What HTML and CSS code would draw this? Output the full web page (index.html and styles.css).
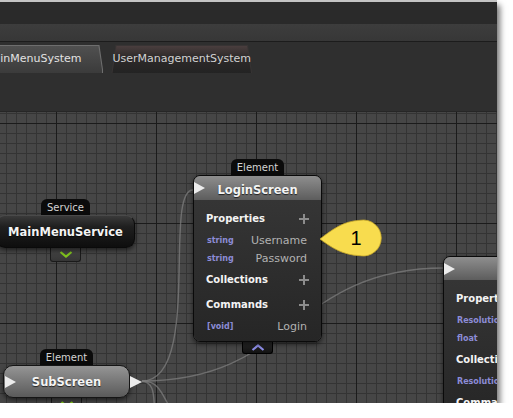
FILE: index.html
```html
<!DOCTYPE html>
<html>
<head>
<meta charset="utf-8">
<link rel="stylesheet" href="styles.css">
</head>
<body>
<div class="window">
  <div class="titlebar"></div>
  <div class="toolbar"></div>
  <div class="tabbar">
    <div class="tab tab-active"><span>MainMenuSystem</span></div>
    <div class="tab tab-inactive"><span>UserManagementSystem</span></div>
  </div>
  <div class="subbar"></div>
  <div class="canvas">
    <svg class="wires" width="497" height="291" viewBox="0 0 497 291">
      <path d="M142,269 C292,269 294,156 444,156"/>
      <path d="M142,269 C202,269 163,78 193,78"/>
      <path d="M142,269 C165,269 162,292 182,312"/>
      <path d="M142,269 C156,271 153,286 155,300"/>
    </svg>

    <div class="node n-service">
      <div class="node-label">Service</div>
      <div class="card card-service"><span class="card-title">MainMenuService</span></div>
      <div class="toggle toggle-green">
        <svg width="14" height="7" viewBox="0 0 14 7"><path d="M1.5 1 L7 5.5 L12.5 1" fill="none" stroke="#7fc21e" stroke-width="2.2"/></svg>
      </div>
    </div>

    <div class="node n-login">
      <div class="node-label">Element</div>
      <div class="card card-element">
        <div class="card-head"><span class="port-in"></span><span class="card-title">LoginScreen</span></div>
        <div class="card-body">
          <div class="section-head"><span>Properties</span><svg class="plus" width="10" height="10" viewBox="0 0 10 10"><rect x="4" y="0" width="2" height="10"/><rect x="0" y="4" width="10" height="2"/></svg></div>
          <div class="items">
            <div class="item"><span class="type">string</span><span class="name">Username</span></div>
            <div class="item"><span class="type">string</span><span class="name">Password</span></div>
          </div>
          <div class="section-head"><span>Collections</span><svg class="plus" width="10" height="10" viewBox="0 0 10 10"><rect x="4" y="0" width="2" height="10"/><rect x="0" y="4" width="10" height="2"/></svg></div>
          <div class="items"></div>
          <div class="section-head"><span>Commands</span><svg class="plus" width="10" height="10" viewBox="0 0 10 10"><rect x="4" y="0" width="2" height="10"/><rect x="0" y="4" width="10" height="2"/></svg></div>
          <div class="items">
            <div class="item"><span class="type">[void]</span><span class="name">Login</span></div>
          </div>
        </div>
      </div>
      <div class="toggle toggle-dark">
        <svg width="14" height="7" viewBox="0 0 14 7"><path d="M1.5 6 L7 1.5 L12.5 6" fill="none" stroke="#8d8de6" stroke-width="2.2"/></svg>
      </div>
    </div>

    <div class="node n-sub">
      <div class="node-label">Element</div>
      <div class="card card-sub">
        <span class="port-in port-sub"></span>
        <span class="card-title">SubScreen</span>
        <span class="port-out"></span>
      </div>
      <div class="toggle toggle-green">
        <svg width="14" height="7" viewBox="0 0 14 7"><path d="M1.5 1 L7 5.5 L12.5 1" fill="none" stroke="#7fc21e" stroke-width="2.2"/></svg>
      </div>
    </div>

    <div class="node n-right">
      <div class="card card-element">
        <div class="card-head head-right"><span class="port-in"></span></div>
        <div class="card-body">
          <div class="section-head"><span>Properties</span></div>
          <div class="items">
            <div class="item"><span class="type">Resolution</span><span class="name">Size</span></div>
            <div class="item"><span class="type">float</span><span class="name">Scale</span></div>
          </div>
          <div class="section-head"><span>Collections</span></div>
          <div class="items">
            <div class="item"><span class="type">Resolution</span><span class="name">List</span></div>
          </div>
          <div class="section-head"><span>Commands</span></div>
        </div>
      </div>
    </div>

    <svg class="callout" width="70" height="42" viewBox="316 104 70 42">
      <path d="M320,127 C332,118 343,109 360,108.3 A18,18 0 1 1 360,143.7 C343,143 332,136 320,127 Z" fill="#f8dc4e" stroke="#c9a92a" stroke-width="0.8"/>
      <text x="356" y="133" text-anchor="middle">1</text>
    </svg>
  </div>
</div>
</body>
</html>
```
FILE: styles.css
```css
html, body {
  margin: 0;
  padding: 0;
  background: #ffffff;
}

.window {
  width: 497px;
  height: 403px;
  box-sizing: border-box;
  border-top: 2px solid #c4c4c4;
  display: flex;
  flex-direction: column;
  overflow: hidden;
  box-shadow: 3px 5px 6px rgba(0, 0, 0, 0.55);
  font-family: "DejaVu Sans", Verdana, sans-serif;
}

.titlebar {
  height: 22px;
  background: #2a2a2a;
  flex: none;
}

.toolbar {
  height: 17px;
  flex: none;
  background: linear-gradient(#3d3d3d, #373737);
  border-bottom: 1px solid #1c1c1c;
}

.tabbar {
  height: 31px;
  flex: none;
  box-sizing: border-box;
  padding-top: 3px;
  background: #2f2f2f;
  display: flex;
  gap: 8px;
}

.tab {
  position: relative;
  height: 28px;
  font-size: 11px;
  line-height: 27px;
  white-space: nowrap;
}

.tab span {
  position: relative;
  z-index: 1;
}

.tab::before,
.tab::after {
  content: "";
  position: absolute;
  clip-path: polygon(4px 0, calc(100% - 4px) 0, 100% 100%, 0 100%);
}

.tab::before {
  inset: 0;
}

.tab::after {
  inset: 1px 1px 0 1px;
}

.tab-active {
  margin-left: -22px;
  padding: 0 22px 0 6px;
  color: #e2e2e2;
}

.tab-active::before {
  background: #6e6e6e;
}

.tab-active::after {
  background: linear-gradient(#505050, #3b3b3b);
}

.tab-inactive {
  padding: 0 1px;
  color: #d2d2d2;
}

.tab-inactive::before {
  background: #383434;
}

.tab-inactive::after {
  background: linear-gradient(#4a3e3e 0%, #2e2a2a 40%, #232323 100%);
}

.subbar {
  height: 38px;
  flex: none;
  background: #2f2f2f;
  border-bottom: 1px solid #262626;
}

.canvas {
  flex: 1;
  position: relative;
  overflow: hidden;
  background-color: #464646;
  background-image:
    linear-gradient(to right, #1b1b1b 1px, transparent 1px),
    linear-gradient(to bottom, #1b1b1b 1px, transparent 1px),
    linear-gradient(to right, #343434 1px, transparent 1px),
    linear-gradient(to bottom, #343434 1px, transparent 1px);
  background-size: 100px 100%, 100% 100px, 10px 100%, 100% 10px;
  background-position: 56px 0, 0 11px, 6px 0, 0 1px;
}

.wires {
  position: absolute;
  left: 0;
  top: 0;
}

.wires path {
  fill: none;
  stroke: rgba(125, 125, 125, 0.75);
  stroke-width: 1.4;
}

/* nodes */
.node {
  position: absolute;
  display: flex;
  flex-direction: column;
  align-items: center;
}

.n-login { left: 193px; top: 47px; width: 129px; }
.n-service { left: -4px; top: 87px; width: 139px; }
.n-sub { left: 3px; top: 237px; width: 127px; }
.n-right { left: 443px; top: 144px; width: 129px; }

.node-label {
  height: 16px;
  padding: 0 6px;
  background: #0b0b0b;
  border-radius: 6px 6px 0 0;
  color: #d4d4d4;
  font-size: 10px;
  line-height: 17px;
}

.card {
  align-self: stretch;
  box-sizing: border-box;
  border: 1px solid #0a0a0a;
  box-shadow: 0 2px 5px rgba(0, 0, 0, 0.6);
  position: relative;
}

.card-title {
  color: #f4f4f4;
  font-weight: bold;
  font-size: 11.5px;
  text-shadow: 0 1px 1px rgba(0, 0, 0, 0.7);
}

.card-element {
  border-radius: 7px;
  overflow: hidden;
}

.card-head {
  position: relative;
  height: 24px;
  box-sizing: border-box;
  padding-top: 3px;
  display: flex;
  align-items: center;
  justify-content: center;
  background: linear-gradient(#8e8e8e, #5d5d5d);
}

.head-right {
  height: 23px;
}

.port-in {
  position: absolute;
  left: 0;
  top: 50%;
  margin-top: -6px;
  width: 0;
  height: 0;
  border-left: 11px solid #ececec;
  border-top: 6px solid transparent;
  border-bottom: 6px solid transparent;
}

.card-body {
  padding: 8px 12px 4px 12px;
  background: linear-gradient(#353535, #262626);
}

.section-head {
  height: 21px;
  display: flex;
  align-items: center;
  justify-content: space-between;
  color: #f4f4f4;
  font-weight: bold;
  font-size: 10px;
  white-space: nowrap;
}

.plus {
  fill: #8c8c8c;
}

.items {
  padding: 2px 2px 2px 1px;
}

.item {
  height: 18px;
  display: flex;
  align-items: center;
  justify-content: space-between;
  white-space: nowrap;
}

.type {
  color: #8c8cd6;
  font-weight: bold;
  font-size: 8px;
}

.name {
  color: #b2b2b2;
  font-size: 11px;
}

.card-service {
  height: 33px;
  border-radius: 9px;
  border-top-color: #4a4a4a;
  background: linear-gradient(#3a3a3a 0%, #1f1f1f 35%, #0e0e0e 100%);
  display: flex;
  align-items: center;
  justify-content: center;
}

.card-sub {
  height: 33px;
  border-radius: 10px;
  border-color: #151515;
  background: linear-gradient(#959595 0%, #7a7a7a 45%, #5a5a5a 100%);
  display: flex;
  align-items: center;
  justify-content: center;
}

.port-sub {
  left: 1px;
}

.port-out {
  position: absolute;
  right: -13px;
  top: 50%;
  margin-top: -6px;
  width: 0;
  height: 0;
  border-left: 12px solid #ececec;
  border-top: 6px solid transparent;
  border-bottom: 6px solid transparent;
}

.toggle {
  width: 31px;
  height: 12px;
  box-sizing: border-box;
  border: 1px solid #000;
  border-top: 0;
  border-radius: 0 0 3px 3px;
  display: flex;
  align-items: center;
  justify-content: center;
}

.toggle-dark {
  background: linear-gradient(#2a2a2a, #121212);
}

.toggle-green {
  height: 14px;
  background: linear-gradient(#474747, #363636);
  border-color: #1a1a1a;
}

.callout {
  position: absolute;
  left: 316px;
  top: 104px;
}

.callout text {
  font-family: "Liberation Sans", Arial, sans-serif;
  font-size: 20px;
  fill: #000;
}
```
